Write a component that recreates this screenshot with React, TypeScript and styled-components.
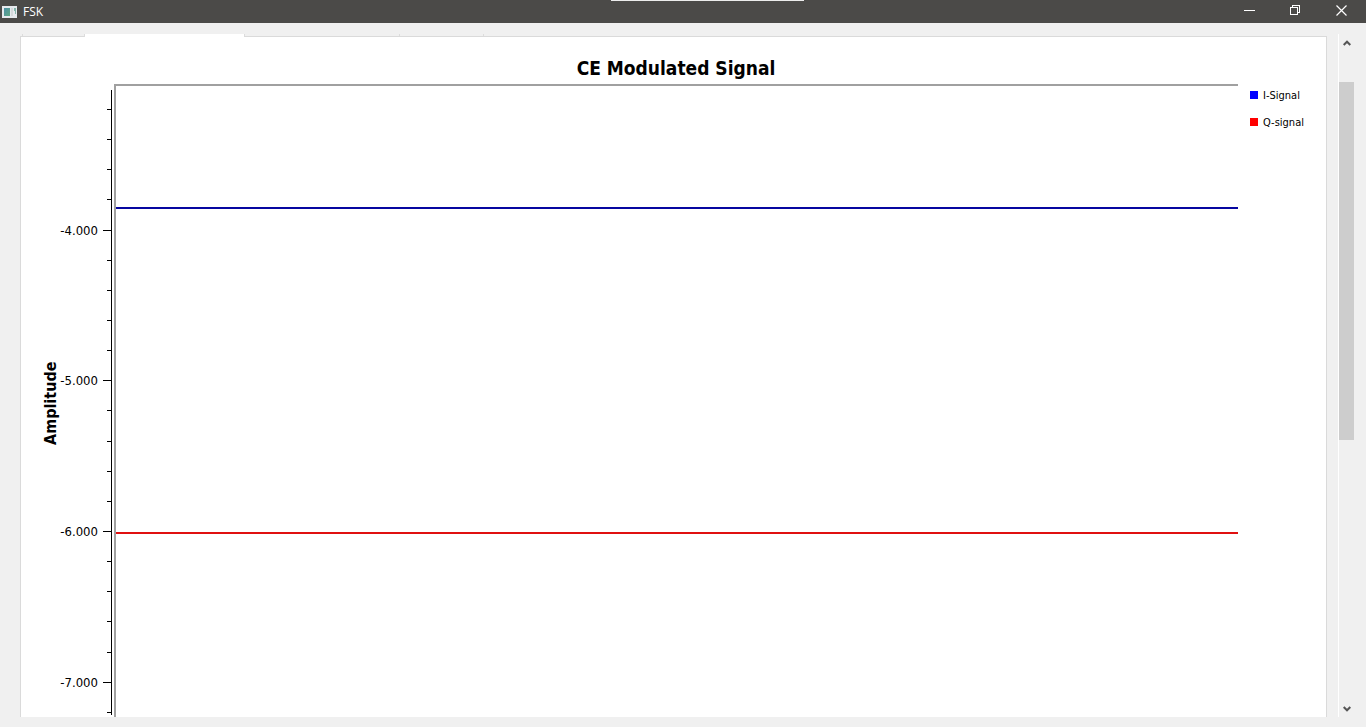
import React from "react";
import styled, { createGlobalStyle } from "styled-components";

const GlobalStyle = createGlobalStyle`
  * { box-sizing: border-box; }
  body {
    margin: 0;
    background: #f0f0f0;
    color: #000;
    font-family: "Tahoma", "DejaVu Sans Condensed", "Noto Sans", sans-serif;
  }
`;

const Window = styled.div`
  display: flex;
  flex-direction: column;
  height: 100vh;
  overflow: hidden;
`;

const TitleBar = styled.header`
  position: relative;
  display: flex;
  align-items: center;
  flex: none;
  height: 23px;
  padding: 0 2px;
  background: #4b4a48;
  color: #fff;
`;

const DragHandle = styled.div`
  position: absolute;
  top: 0;
  left: calc(50% - 72px);
  width: 193px;
  height: 1px;
  background: #ececec;
`;

const WindowTitle = styled.h1`
  flex: 1;
  margin: 0 0 0 6px;
  font: 400 12px/22px "Open Sans", "Noto Sans", sans-serif;
`;

const WindowButton = styled.button`
  display: flex;
  align-items: center;
  justify-content: center;
  width: 46px;
  height: 23px;
  padding: 0 0 2px;
  border: 0;
  background: none;
  color: #fff;
`;

const Body = styled.main`
  display: flex;
  flex: 1;
  gap: 11px;
  min-height: 0;
  padding: 11px 12px 10px 20px;
`;

const ScrollArea = styled.div`
  display: flex;
  flex: 1;
  flex-direction: column;
  min-width: 0;
  overflow: hidden;
`;

const TabStrip = styled.div`
  position: relative;
  display: flex;
  flex: none;
  height: 3px;
  margin: 0 0 -1px 2px;
`;

const TabEdge = styled.div<{ $width: number; $selected?: boolean }>`
  width: ${(p) => p.$width}px;
  height: ${(p) => (p.$selected ? 3 : 2)}px;
  border-left: 1px solid #dcdcdc;
  background: ${(p) => (p.$selected ? "#fff" : "transparent")};
`;

const Page = styled.section`
  flex: 1;
  min-height: 0;
  overflow: hidden;
  border: 1px solid #dadada;
  border-bottom: 0;
  background: #fff;
`;

const Plot = styled.div`
  display: grid;
  grid-template-columns: 38px 55px minmax(0, 1fr) 88px;
  grid-template-rows: 47px 633px;
`;

const PlotTitle = styled.h2`
  grid-column: 3;
  margin: 0;
  padding-top: 21px;
  font-size: 19px;
  font-weight: 700;
  line-height: 20px;
  text-align: center;
`;

const AxisTitle = styled.div`
  grid-column: 1;
  padding: 0 22px 6px 0;
  font-size: 16px;
  font-weight: 700;
  line-height: 16px;
  text-align: center;
  writing-mode: vertical-rl;
  transform: rotate(180deg);
`;

const Scale = styled.svg`
  display: block;
  width: 55px;
  height: 633px;
  font-size: 13px;
`;

const Canvas = styled.svg`
  display: block;
  width: 100%;
  height: 633px;
`;

const Legend = styled.ul`
  display: flex;
  flex-direction: column;
  gap: 11px;
  margin: 0;
  padding: 3px 0 0 12px;
  list-style: none;
`;

const LegendItem = styled.li<{ $color: string }>`
  display: flex;
  align-items: center;
  gap: 5px;
  height: 16px;
  font-size: 11px;
  line-height: 18px;

  &::before {
    content: "";
    width: 8px;
    height: 8px;
    background: ${(p) => p.$color};
  }
`;

const LegendLabel = styled.span`
  padding-top: 2px;
  line-height: 16px;
`;

const ScrollBar = styled.div`
  display: flex;
  flex: none;
  flex-direction: column;
  width: 16px;
  border-left: 1px solid #fff;
`;

const ScrollButton = styled.button`
  display: flex;
  align-items: center;
  justify-content: center;
  flex: none;
  width: 15px;
  height: 17px;
  padding: 0;
  border: 0;
  background: none;
`;

const ScrollTrack = styled.div`
  display: flex;
  flex: 1;
  flex-direction: column;
  padding-top: 31px;
`;

const ScrollThumb = styled.div`
  height: 58%;
  background: #cdcdcd;
`;

const FIRST_MAJOR = 146;
const MINOR_STEP = 30.15;
const majorLabels = ["-4.000", "-5.000", "-6.000", "-7.000"];
const ticks = Array.from({ length: 20 }, (_, i) => {
  const step = i - 4;
  return {
    y: Math.floor(FIRST_MAJOR + step * MINOR_STEP),
    label: step >= 0 && step % 5 === 0 ? majorLabels[step / 5] : null,
  };
}).concat({ y: 628, label: null });

const tabs = [
  { width: 62 },
  { width: 160, selected: true },
  { width: 155 },
  { width: 84 },
  { width: 1 },
];

function AppIcon() {
  return (
    <svg width="15" height="12" viewBox="0 0 15 12" aria-hidden="true">
      <defs>
        <linearGradient id="pane" x1="0" y1="0" x2="1" y2="1">
          <stop offset="0" stopColor="#4d8fa5" />
          <stop offset="1" stopColor="#5fa885" />
        </linearGradient>
      </defs>
      <rect width="15" height="12" fill="#e6eaee" />
      <rect x="2" y="2" width="6" height="8" fill="url(#pane)" />
      <rect x="9" y="2" width="2" height="8" fill="#d5d9dc" />
      <path d="M12 2h2v6h-1v-3h-1z" fill="#84b5ab" />
    </svg>
  );
}

function Chevron({ down }: { down?: boolean }) {
  return (
    <svg width="8" height="6" viewBox="0 0 8 6" aria-hidden="true">
      <path
        d={down ? "M0.7 1L4 4.3L7.3 1" : "M0.7 5L4 1.7L7.3 5"}
        fill="none"
        stroke="#555"
        strokeWidth="2"
      />
    </svg>
  );
}

export default function App() {
  return (
    <Window>
      <GlobalStyle />
      <TitleBar>
        <AppIcon />
        <WindowTitle>FSK</WindowTitle>
        <WindowButton aria-label="Minimize">
          <svg width="11" height="11" shapeRendering="crispEdges">
            <path d="M0 5.5h11" stroke="currentColor" />
          </svg>
        </WindowButton>
        <WindowButton aria-label="Restore">
          <svg width="11" height="11" fill="none" stroke="currentColor" shapeRendering="crispEdges">
            <path d="M0.5 2.5h7v7h-7zM2.5 2.5v-2h7v7h-2" />
          </svg>
        </WindowButton>
        <WindowButton aria-label="Close">
          <svg width="11" height="11" fill="none" stroke="currentColor">
            <path d="M0.5 0.5l10 10M10.5 0.5l-10 10" strokeWidth="1.2" />
          </svg>
        </WindowButton>
        <DragHandle />
      </TitleBar>

      <Body>
        <ScrollArea>
          <TabStrip aria-hidden="true">
            {tabs.map((tab, i) => (
              <TabEdge key={i} $width={tab.width} $selected={tab.selected} />
            ))}
          </TabStrip>
          <Page>
            <Plot>
              <PlotTitle>CE Modulated Signal</PlotTitle>
              <AxisTitle>Amplitude</AxisTitle>
              <Scale>
                <rect x="52" y="6" width="1" height="625" />
                {ticks.map(({ y, label }) => (
                  <g key={y}>
                    <rect x={label ? 44 : 48} y={y} width={label ? 8 : 4} height="1" />
                    {label && (
                      <text x="39" y={y + 5} textAnchor="end">
                        {label}
                      </text>
                    )}
                  </g>
                ))}
              </Scale>
              <Canvas role="img" aria-label="I-Signal and Q-signal">
                <rect width="100%" height="2" fill="#a0a0a0" />
                <rect width="2" height="100%" fill="#a0a0a0" />
                <rect x="2" y="123" width="100%" height="2" fill="#0606a0" />
                <rect x="2" y="448" width="100%" height="2" fill="#e01010" />
              </Canvas>
              <Legend>
                <LegendItem $color="#0000ff">
                  <LegendLabel>I-Signal</LegendLabel>
                </LegendItem>
                <LegendItem $color="#ff0000">
                  <LegendLabel>Q-signal</LegendLabel>
                </LegendItem>
              </Legend>
            </Plot>
          </Page>
        </ScrollArea>
        <ScrollBar>
          <ScrollButton aria-label="Scroll up">
            <Chevron />
          </ScrollButton>
          <ScrollTrack>
            <ScrollThumb />
          </ScrollTrack>
          <ScrollButton aria-label="Scroll down">
            <Chevron down />
          </ScrollButton>
        </ScrollBar>
      </Body>
    </Window>
  );
}
